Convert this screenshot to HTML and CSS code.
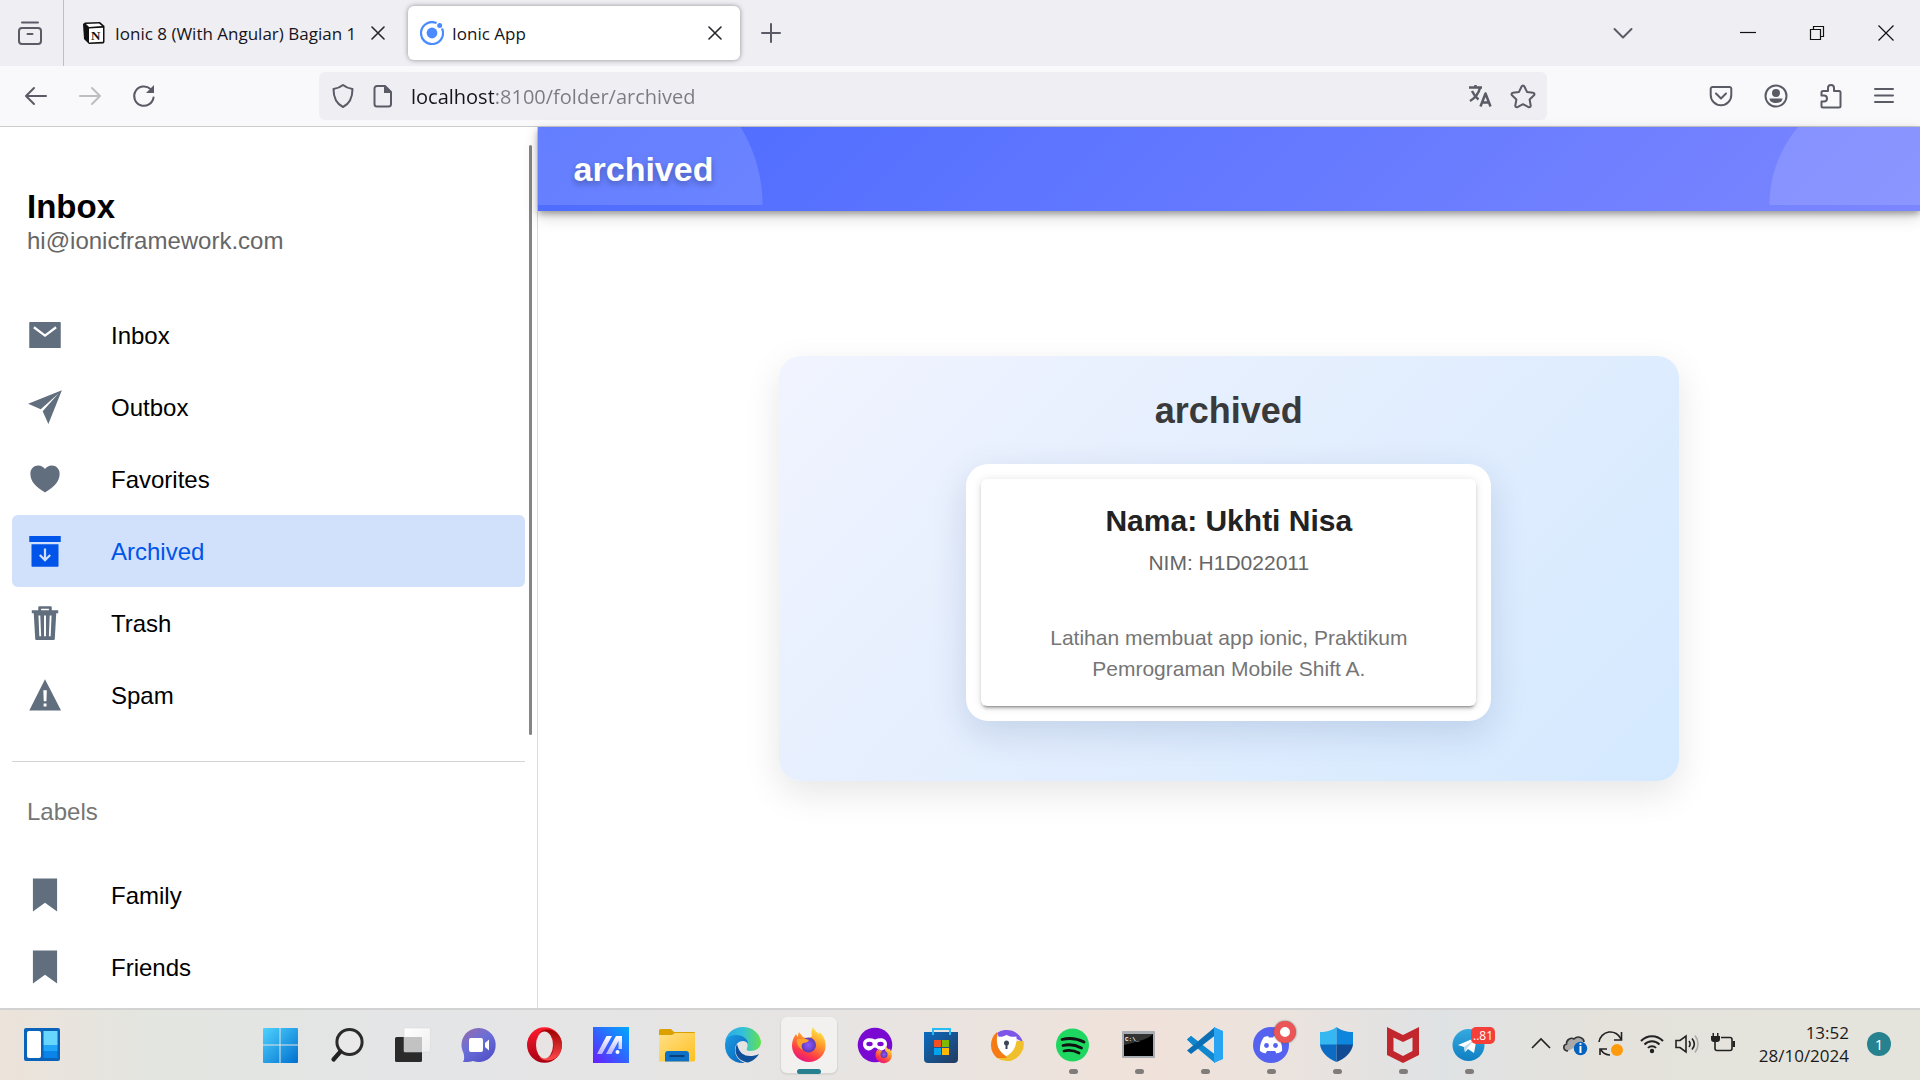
FILE: index.html
```html
<!DOCTYPE html>
<html lang="id">
<head>
<meta charset="utf-8">
<meta name="viewport" content="width=device-width, initial-scale=1">
<title>Ionic App</title>
<link rel="stylesheet" href="styles.css">
</head>
<body>
<div class="desktop">

<header class="browser">
  <div class="tabstrip">
    <button class="recent" aria-label="Recent browsing">
      <svg width="26" height="26" viewBox="0 0 26 26" class="line"><path d="M5 2.500h16" /><rect x="2" y="8" width="22" height="16" rx="3"/><path d="M10.500 14h5"/></svg>
    </button>
    <div class="tab">
      <svg width="22" height="22" viewBox="0 0 22 22"><path d="M0 2 2 0.500 17 0l4.500 4v16l-1 1.500L6 22l-5-5z" fill="#111"/><path d="M6 6.500 20 5.700v14L6 20.500z" fill="#fff"/><path d="M3 2 16 1.500l3 2.500L6 5z" fill="#fff"/><text x="8" y="18" class="notion-n">N</text></svg>
      <span class="tab-title">Ionic 8 (With Angular) Bagian 1</span>
      <button class="tab-close" aria-label="Close tab"><svg width="14" height="14" viewBox="0 0 14 14" class="line dark"><path d="m1 1 12 12M13 1 1 13"/></svg></button>
    </div>
    <div class="tab tab-active">
      <svg width="24" height="24" viewBox="0 0 24 24"><path d="M16.600 2.100A11 11 0 1 0 22 7.500" fill="none" stroke="#4a8cff" stroke-width="2.200"/><circle cx="12" cy="12" r="5.400" fill="#4a8cff"/><circle cx="19.700" cy="4.500" r="2.500" fill="#4a8cff"/></svg>
      <span class="tab-title">Ionic App</span>
      <button class="tab-close" aria-label="Close tab"><svg width="14" height="14" viewBox="0 0 14 14" class="line dark"><path d="m1 1 12 12M13 1 1 13"/></svg></button>
    </div>
    <button class="newtab" aria-label="New tab"><svg width="20" height="20" viewBox="0 0 20 20" class="line"><path d="M10 1v18M1 10h18"/></svg></button>
    <button class="alltabs" aria-label="List all tabs"><svg width="20" height="20" viewBox="0 0 20 20" class="line"><path d="m1.500 6 8.500 8.500L18.500 6"/></svg></button>
    <div class="winbtns">
      <button aria-label="Minimize"><svg width="16" height="16" viewBox="0 0 16 16" class="hair"><path d="M0 7.500h16"/></svg></button>
      <button aria-label="Restore"><svg width="16" height="16" viewBox="0 0 16 16" class="hair"><path d="M1.500 4.500h10v10h-10zM4.500 4.500v-3h10v10h-3"/></svg></button>
      <button aria-label="Close"><svg width="18" height="18" viewBox="0 0 18 18" class="hair"><path d="m1.500 1.500 15 15M16.500 1.500l-15 15"/></svg></button>
    </div>
  </div>
  <div class="toolbar">
    <div class="navbtns">
      <button aria-label="Back"><svg width="24" height="24" viewBox="0 0 24 24" class="line"><path d="M22 12H2M10 4l-8 8 8 8"/></svg></button>
      <button aria-label="Forward" disabled><svg width="24" height="24" viewBox="0 0 24 24" class="line faint"><path d="M2 12h20M14 4l8 8-8 8"/></svg></button>
      <button aria-label="Reload"><svg width="24" height="24" viewBox="0 0 24 24" class="line"><path d="M21.500 13.500A9.700 9.700 0 1 1 18.500 5"/><path d="M22 1v8h-8z" fill="#5b5b66" stroke="none"/></svg></button>
    </div>
    <div class="urlbar">
      <svg width="24" height="26" viewBox="0 0 24 26" class="line"><path d="M12 2c3 2.500 6 3.500 9.500 4 0 8-2.500 14.500-9.500 18C5 20.500 2.500 14 2.500 6 6 5.500 9 4.500 12 2z"/></svg>
      <svg width="20" height="24" viewBox="0 0 20 24" class="line"><path d="M4 2h8l6 6v12a2.500 2.500 0 0 1-2.500 2.500H4A2.500 2.500 0 0 1 1.500 20V4.500A2.500 2.500 0 0 1 4 2z"/><path d="M11 1.500V9h7.500z" fill="#5b5b66" stroke="none"/></svg>
      <input class="url" type="text" aria-label="Address" value="localhost:8100/folder/archived">
      <button aria-label="Translate page"><svg width="24" height="24" viewBox="0 0 24 24" class="line bold"><path d="M1 3.500h13M7.500 1v2M12 4C10.500 10 7 14 2 17M4 7c2 4 4 6.500 6.500 8.500"/><path d="m12.500 22.500 5-13 5 13M14.500 18.500h6.500"/></svg></button>
      <button aria-label="Bookmark page"><svg width="26" height="26" viewBox="0 0 26 26" class="line"><path d="M13 2.500c.7 0 1.100.4 1.400 1l2.600 5.400 6 .8c1.400.2 1.900 1.600 1 2.600l-4.400 4.200 1.100 6c.2 1.400-1.100 2.200-2.200 1.600L13 21.200l-5.500 2.900c-1.100.6-2.400-.2-2.200-1.600l1.100-6L2 12.300c-.9-1-.4-2.400 1-2.600l6-.8 2.600-5.400c.3-.6.700-1 1.400-1z"/></svg></button>
    </div>
    <div class="extbtns">
      <button aria-label="Pocket"><svg width="24" height="24" viewBox="0 0 24 24" class="line"><path d="M3.500 3h17A1.800 1.800 0 0 1 22.300 5v6a10.300 10.300 0 0 1-20.600 0V5A1.800 1.800 0 0 1 3.500 3z"/><path d="m7 9.500 5 5 5-5"/></svg></button>
      <button aria-label="Account"><svg width="24" height="24" viewBox="0 0 24 24" class="line"><circle cx="12" cy="12" r="10.500"/><circle cx="12" cy="9" r="4" fill="#5b5b66" stroke="none"/><path d="M5.500 14.500h13c0 3-3 4.500-6.500 4.500s-6.500-1.500-6.500-4.500z" fill="#5b5b66" stroke="none"/></svg></button>
      <button aria-label="Extensions"><svg width="24" height="26" viewBox="0 0 24 26" class="line"><path d="M4 8h5V5a3 3 0 0 1 6 0v3h5a1.500 1.500 0 0 1 1.500 1.500V23A1.500 1.500 0 0 1 20 24.500H4A1.500 1.500 0 0 1 2.500 23v-4.500H5a3 3 0 0 0 0-6H2.500v-3A1.500 1.500 0 0 1 4 8z"/></svg></button>
      <button aria-label="Menu"><svg width="20" height="20" viewBox="0 0 20 20" class="line"><path d="M1 3h18M1 9.500h18M1 16h18"/></svg></button>
    </div>
  </div>
</header>

<div class="page">
  <aside class="menu">
    <div class="menu-head">
      <h1 class="menu-title">Inbox</h1>
      <p class="menu-note">hi@ionicframework.com</p>
    </div>
    <nav class="menu-list" aria-label="Folders">
      <a class="item" href="#inbox"><svg class="ion" viewBox="0 0 512 512"><path d="M32 80a10 10 0 0 1 10-10h428a10 10 0 0 1 10 10v352a10 10 0 0 1-10 10H42a10 10 0 0 1-10-10z"/><path d="m98 146 158 120 158-120" fill="none" stroke="#fff" stroke-width="32"/></svg><span class="item-label">Inbox</span></a>
      <a class="item" href="#outbox"><svg class="ion" viewBox="0 0 512 512"><path d="M496 16 16 208l179 81L448 64 223 317l81 179z"/></svg><span class="item-label">Outbox</span></a>
      <a class="item" href="#favorites"><svg class="ion" viewBox="0 0 512 512"><path d="m256 448-9-6c-42.780-28.570-96.910-60.860-137-108.320-42.250-50-62.520-101.350-62-157C48.630 114.540 98.460 64 159.080 64c48.110 0 80.100 28 96.920 48.210C272.820 92 304.810 64 352.920 64c60.620 0 110.450 50.540 111.080 112.650.560 55.680-19.710 107-62 157-40.090 47.490-94.220 79.780-137 108.350z"/></svg><span class="item-label">Favorites</span></a>
      <a class="item item-active" href="#archived"><svg class="ion" viewBox="0 0 512 512"><path d="M32 44h448v84H32zM64 160h384v310a10 10 0 0 1-10 10H74a10 10 0 0 1-10-10z"/><path d="M256 220v160M182 314l74 74 74-74" fill="none" stroke="#d1e0fb" stroke-width="32"/></svg><span class="item-label">Archived</span></a>
      <a class="item" href="#trash"><svg class="ion" viewBox="0 0 512 512"><path fill-rule="evenodd" d="M160 76V32a16 16 0 0 1 16-16h160a16 16 0 0 1 16 16v44h92v40h-28l-21 366a15 15 0 0 1-15 14H132a15 15 0 0 1-15-14L96 116H68V76zM200 76h112V54H200zM163 150l12 294h26l-12-294zM242 150v294h28V150zM323 150l-12 294h26l12-294z"/></svg><span class="item-label">Trash</span></a>
      <a class="item" href="#spam"><svg class="ion" viewBox="0 0 512 512"><path fill-rule="evenodd" d="M256 32 484 476H32zM232 190l6 156h38l6-156zM236 376v44h42v-44z"/></svg><span class="item-label">Spam</span></a>
    </nav>
    <nav class="labels-list" aria-labelledby="labels-h">
      <h2 class="labels-title" id="labels-h">Labels</h2>
      <a class="item" href="#family"><svg class="ion" viewBox="0 0 512 512"><path d="M428 490 256 366 84 490V22h344z"/></svg><span class="item-label">Family</span></a>
      <a class="item" href="#friends"><svg class="ion" viewBox="0 0 512 512"><path d="M428 490 256 366 84 490V22h344z"/></svg><span class="item-label">Friends</span></a>
    </nav>
    <div class="scroll-thumb"></div>
  </aside>

  <main class="content">
    <div class="app-header">
      <div class="bubbles"></div>
      <h1 class="app-title">archived</h1>
    </div>
    <div class="stage">
      <section class="panel">
        <h2 class="panel-title">archived</h2>
        <div class="frame">
          <article class="card">
            <h3 class="card-name">Nama: Ukhti Nisa</h3>
            <p class="card-nim">NIM: H1D022011</p>
            <p class="card-text">Latihan membuat app ionic, Praktikum Pemrograman Mobile Shift A.</p>
          </article>
        </div>
      </section>
    </div>
  </main>
</div>

<footer class="taskbar">
  <svg width="0" height="0" class="defs" aria-hidden="true"><defs>
    <linearGradient id="win" x1="0" y1="0" x2="1" y2="1"><stop offset="0" stop-color="#4fd2ff"/><stop offset="1" stop-color="#0070ce"/></linearGradient>
    <linearGradient id="chat" x1="0" y1="0" x2=".7" y2="1"><stop offset="0" stop-color="#9a6aa8"/><stop offset=".5" stop-color="#6a6fd8"/><stop offset="1" stop-color="#5252c8"/></linearGradient>
    <linearGradient id="opera" x1="0" y1="0" x2="0" y2="1"><stop offset="0" stop-color="#ff1b2d"/><stop offset="1" stop-color="#a70014"/></linearGradient>
    <linearGradient id="opera2" x1="0" y1="0" x2="0" y2="1"><stop offset="0" stop-color="#9c0000"/><stop offset="1" stop-color="#ff4b4b"/></linearGradient>
    <linearGradient id="asus" x1="0" y1="1" x2="1" y2="0"><stop offset="0" stop-color="#6a1cff"/><stop offset=".5" stop-color="#2f66ff"/><stop offset="1" stop-color="#00a8ff"/></linearGradient>
    <linearGradient id="asusbar" x1="0" y1="0" x2="0" y2="1"><stop offset="0" stop-color="#fff"/><stop offset="1" stop-color="#b9b2ff"/></linearGradient>
    <linearGradient id="folder" x1="0" y1="0" x2="1" y2="1"><stop offset="0" stop-color="#ffe08a"/><stop offset="1" stop-color="#ffc01e"/></linearGradient>
    <linearGradient id="edge" x1="0" y1="0" x2="1" y2="0"><stop offset="0" stop-color="#2aa7e8"/><stop offset=".5" stop-color="#33c1d8"/><stop offset="1" stop-color="#62e24c"/></linearGradient>
    <linearGradient id="edge2" x1="0" y1="0" x2="1" y2="1"><stop offset="0" stop-color="#1b9de2"/><stop offset="1" stop-color="#0b5fb8"/></linearGradient>
    <linearGradient id="fox" x1=".8" y1="0" x2=".3" y2="1"><stop offset="0" stop-color="#fff44f"/><stop offset=".4" stop-color="#ff9a2a"/><stop offset=".75" stop-color="#ff3b47"/><stop offset="1" stop-color="#e31587"/></linearGradient>
    <radialGradient id="foxcore"><stop offset="0" stop-color="#9059ff"/><stop offset="1" stop-color="#5b3bb5"/></radialGradient>
    <linearGradient id="store" x1="0" y1="0" x2="1" y2="1"><stop offset="0" stop-color="#0a6cc0"/><stop offset="1" stop-color="#243a5e"/></linearGradient>
    <linearGradient id="tg" x1="0" y1="0" x2="0" y2="1"><stop offset="0" stop-color="#35a9e0"/><stop offset="1" stop-color="#0f7fc2"/></linearGradient>
    <linearGradient id="glass" x1="0" y1="0" x2="1" y2="1"><stop offset="0" stop-color="#fff"/><stop offset="1" stop-color="#eee"/></linearGradient>
  </defs></svg>
  <button class="widgets" aria-label="Widgets"><svg width="36" height="36" viewBox="0 0 36 36"><rect y="1" width="36" height="33" rx="2" fill="#0a63b8"/><rect x="3" y="4" width="14" height="27" rx="2" fill="#fff"/><path d="M19.500 4h14v14h-14z" fill="#67d6ff"/><path d="M19.500 18h14v6h-14z" fill="#1fa4f8"/><path d="M19.500 24h14v7h-14z" fill="#0a84e8"/></svg></button>
  <div class="apps">
    <button class="app" aria-label="Start"><svg class="app-ic" viewBox="0 0 36 36"><path fill="url(#win)" d="M0 2a1 1 0 0 1 1-1h15.500v16.500H0zM17.500 1H34a1 1 0 0 1 1 1v15.500H17.500zM0 18.500h16.500V36H1a1 1 0 0 1-1-1zM17.500 18.500H35V35a1 1 0 0 1-1 1H17.500z"/></svg></button>
    <button class="app" aria-label="Search"><svg class="app-ic" viewBox="0 0 36 36"><circle cx="20.500" cy="15" r="12.600" fill="#e9e9e9" stroke="#2b2b2b" stroke-width="3"/><path d="m11.500 24.500-7 8" stroke="#222" stroke-width="4.200" stroke-linecap="round"/></svg></button>
    <button class="app" aria-label="Task view"><svg class="app-ic" viewBox="0 0 36 36"><rect y="10" width="27" height="25" rx="1.500" fill="#2b2b2b"/><rect x="9" y="1" width="26.500" height="24" rx="1" fill="url(#glass)" stroke="#d5d5d5" stroke-width=".5"/><path d="M9 10h18v15H9z" fill="#c2c2c2"/></svg></button>
    <button class="app" aria-label="Chat"><svg class="app-ic" viewBox="0 0 36 36"><path d="M18 1a17 17 0 1 1-6 33c-3 1-6 1.300-10 1 1.500-3 1.500-5 .5-9A17 17 0 0 1 18 1z" fill="url(#chat)"/><rect x="8" y="11" width="14" height="14" rx="2" fill="#fff"/><path d="m24 16 4-3.500v11L24 20z" fill="#fff"/></svg></button>
    <button class="app" aria-label="Opera"><svg class="app-ic" viewBox="0 0 36 36"><ellipse cx="17.500" cy="18" rx="17.500" ry="17.800" fill="url(#opera)"/><path d="M12 6C20-2 35 4 35 18S20 38 12 30c12 3 15-4 15-12S22 3 12 6z" fill="url(#opera2)"/><ellipse cx="17.500" cy="18" rx="8.500" ry="13.500" fill="#e8e4e3"/></svg></button>
    <button class="app" aria-label="MyASUS"><svg class="app-ic" viewBox="0 0 36 36"><path d="M0 0h36v36H0z" fill="url(#asus)"/><path d="M4 27 13.500 9H19L9 27zM13 27l10-18h6v13h-3.500v-8L18.500 27z" fill="url(#asusbar)"/><circle cx="24.500" cy="25" r="2" fill="#fff"/></svg></button>
    <button class="app" aria-label="File Explorer"><svg class="app-ic" viewBox="0 0 36 36"><path d="M0 3.500A1.500 1.500 0 0 1 1.500 2H12l3 3h20a1 1 0 0 1 1 1v6H0z" fill="#dca000"/><path d="M0 8h13l3-2h20v27a1.500 1.500 0 0 1-1.500 1.500h-33A1.500 1.500 0 0 1 0 33z" fill="url(#folder)"/><path d="M6 34.500V27a3 3 0 0 1 3-3h18a3 3 0 0 1 3 3v7.500z" fill="#0d72c7"/><path d="M10.500 29h15" stroke="#0a3f7a" stroke-width="2"/></svg></button>
    <button class="app" aria-label="Edge"><svg class="app-ic" viewBox="0 0 36 36"><path d="M18 0C8 0 2 6.500 0 14c4-5 10-6 15-4 6 2 9 7 7 11-1 2 0 3 3 3 6 0 11-3 11-9C35 6 27 0 18 0z" fill="url(#edge)"/><path d="M0 18C0 10 6 8 11 8c7 0 12 4 12 9-1-2-3-3-5-3-5 0-8 4-8 9 0 6 4 11 10 13C8 37 0 29 0 18z" fill="url(#edge2)"/><path d="M12 17c-4 8 0 16 10 18.500 5-.5 9-4 12-8.500-3 1.500-6 2-9 2-6 0-11-3-13-12z" fill="#10509a"/></svg></button>
    <button class="app app-open" aria-label="Firefox"><svg class="app-ic" viewBox="0 0 36 36"><path id="foxshape" d="M22 0c1 3 4 5 6 7l.5-2C33 9 35 14 34.500 20 34 28 27 35 18 35S1 28 1 19c0-4 1-8 4-12l1.500 3L8 5l4 5 5 2 4-3c-1-3-.5-6 1-9z" fill="url(#fox)"/><circle cx="17.500" cy="18" r="7.500" fill="url(#foxcore)"/><path d="M6 12c4 0 8-1 12 1-1 2-3 3-6 3-2 2-2 5 0 7-4-2-7-6-6-11z" fill="#ffa32c"/></svg></button>
    <button class="app" aria-label="Firefox private browsing"><svg class="app-ic" viewBox="0 0 36 36"><circle cx="18" cy="18" r="17.300" fill="#7a0ad1"/><path d="M6 17c0-6 7-7 12-4.500C23 10 30 11 30 17c0 4-3 6.500-6 6.500s-4-3-6-3-3 3-6 3-6-2.500-6-6.500z" fill="#fff"/><ellipse cx="12.500" cy="17" rx="3.200" ry="2.200" fill="#7a0ad1"/><ellipse cx="23.500" cy="17" rx="3.200" ry="2.200" fill="#7a0ad1"/><use href="#foxshape" transform="translate(18 19) scale(.49)"/><circle cx="27" cy="27.500" r="3.500" fill="url(#foxcore)"/></svg></button>
    <button class="app" aria-label="Microsoft Store"><svg class="app-ic" viewBox="0 0 36 36"><path d="M1 5h34v27a4 4 0 0 1-4 4H5a4 4 0 0 1-4-4z" fill="url(#store)"/><path d="M10 8V2h17v6" fill="none" stroke="#26bdf5" stroke-width="2"/><path d="M11 13h7v7h-7z" fill="#f25022"/><path d="M19 13h7v7h-7z" fill="#7fba00"/><path d="M11 21h7v7h-7z" fill="#00a4ef"/><path d="M19 21h7v7h-7z" fill="#ffb900"/></svg></button>
    <button class="app" aria-label="Secure Browser"><svg class="app-ic" viewBox="0 0 36 36"><path d="M8 6A17 17 0 0 1 34 15L26 11 10 10z" fill="#7d55e8"/><path d="M34.500 14A17 17 0 0 1 8 31l9-3 11-14z" fill="#f0c02c"/><path d="M8 5a17 17 0 0 0 0 26h10L9 20z" fill="#f57c14"/><path d="M17.500 8c4 2 7 2 10 1.500C28 19 24 26 17.500 29 11 26 7 19 8 9.500c3 .5 5.500.5 9.500-1.500z" fill="#fff"/><circle cx="17.500" cy="16" r="2.500" fill="#3c4358"/><path d="M16.500 17h2v5h-2z" fill="#3c4358"/></svg></button>
    <button class="app app-running" aria-label="Spotify"><svg class="app-ic" viewBox="0 0 36 36"><circle cx="17.500" cy="18" r="16.500" fill="#1ed760"/><path d="M7 12.500c8-2 15-1 22 2.500M8 18.500c6-1.500 12-1 18.500 2.500M9 24c5-1.200 10-.6 15 2" fill="none" stroke="#111" stroke-width="2.800" stroke-linecap="round"/></svg></button>
    <button class="app app-running" aria-label="Command Prompt"><svg class="app-ic" viewBox="0 0 36 36"><rect x="1" y="4" width="33" height="27" rx="1" fill="#a9acb0"/><path d="M3 7h29v22H3z" fill="#000"/><path d="M3 7h29c-6 6-14 7-29 11z" fill="#333"/><text x="4" y="14" class="cmd-text">C:\_</text></svg></button>
    <button class="app app-running" aria-label="Visual Studio Code"><svg class="app-ic" viewBox="0 0 36 36"><path d="M0 12.500 4 9l24 18.500V36z" fill="#0f88cf"/><path d="M0 23.500 4 27 28 8.500V0z" fill="#0a6fb4"/><path d="M0 12.500 4 9l7 5.500-5 4z" fill="#0f88cf"/><path d="m27 0 9 4v28l-9 4z" fill="#27a4f2"/></svg></button>
    <button class="app app-running" aria-label="Discord"><svg class="app-ic" viewBox="0 0 36 36"><circle cx="18" cy="18" r="18" fill="#5562f0"/><path d="M11 10l4-1 1 1.500h4L21 9l4 1c3 4 4.500 9 4 14-2 1.500-4 2-5.500 2.500L22 24h-8l-1.500 2.500C11 26 9 25.500 7 24c-.5-5 1-10 4-14z" fill="#fff"/><circle cx="13.500" cy="18.500" r="2.400" fill="#5562f0"/><circle cx="22.500" cy="18.500" r="2.400" fill="#5562f0"/></svg><span class="live"></span></button>
    <button class="app app-running" aria-label="Windows Security"><svg class="app-ic" viewBox="0 0 36 36"><path d="M17.500 0v18H1V5c7 0 12-1.500 16.500-5z" fill="#35b8f2"/><path d="M17.500 0v18H34V5c-7 0-12-1.500-16.500-5z" fill="#0f86dd"/><path d="M1 17.500h16.500V35C8 31 2 25 1 17.500z" fill="#0c6cc4"/><path d="M34 17.500H17.500V35C27 31 33 25 34 17.500z" fill="#114a94"/></svg></button>
    <button class="app app-running" aria-label="McAfee"><svg class="app-ic" viewBox="0 0 36 36"><path d="m2 0 16 8 16-8v28l-16 8L2 28zM8.500 10.500v13.500l9.500 5 9.500-5V10.500L18 15z" fill="#c1272d" fill-rule="evenodd"/></svg></button>
    <button class="app app-running" aria-label="Telegram"><svg class="app-ic" viewBox="0 0 36 36"><circle cx="17.500" cy="18" r="16" fill="url(#tg)"/><path d="m7 18 19-8-3 16-6-4-3 3-1-5z" fill="#fff"/><path d="m13 20 10-7-7 8-2 4z" fill="#b9d9ee"/></svg><span class="count">..81</span></button>
  </div>
  <div class="tray">
    <button aria-label="Hidden icons"><svg width="20" height="24" viewBox="0 0 20 24" class="tray-line"><path d="m1 16 9-9 9 9"/></svg></button>
    <div class="sync">
      <svg width="26" height="24" viewBox="0 0 26 24"><path d="M6 19C1 19 .5 13 4.500 12 4 8 9 5 12 7c4-4 10-1 10 3" fill="#a9a9a9" stroke="#333" stroke-width="1.600"/><circle cx="18.500" cy="16.500" r="6.700" fill="#0563bd"/><text x="16.500" y="21" class="info-i">i</text></svg>
      <svg width="26" height="26" viewBox="0 0 26 26" class="tray-line"><path d="M1 11A11.500 11.500 0 0 1 23 8M23.500 1v8H16M2 24v-6h7M3 19c2 3 5 5 9 5"/><circle cx="19" cy="19" r="6" fill="#ff9a0c" stroke="none"/></svg>
    </div>
    <svg width="24" height="24" viewBox="0 0 24 24" class="tray-line"><path d="M1 9C7 2.500 17 2.500 23 9M4.500 12.500c4-4.500 11-4.500 15 0M8 16c2-2.500 6-2.500 8 0" stroke-width="2"/><circle cx="12" cy="19" r="2.200" fill="#222" stroke="none"/></svg>
    <svg width="24" height="24" viewBox="0 0 24 24" class="tray-line"><path d="M1 8.500h4L11 4v16l-6-4.500H1z"/><path d="M14 9c1.500 2 1.500 4 0 6M17 6.500c3 3.500 3 7.500 0 11"/><path d="M20 3.500c4 5 4 12 0 17" stroke="#aaa"/></svg>
    <svg width="26" height="24" viewBox="0 0 26 24" class="tray-line"><path d="M11 5.500h9a2 2 0 0 1 2 2v9a2 2 0 0 1-2 2H7a2 2 0 0 1-2-2V9"/><path d="M1 4h9v3a3 3 0 0 1-3 3H4a3 3 0 0 1-3-3zM2.500 1H4v4H2.500zM7 1h1.500v4H7zM22.500 9H25v6h-2.500z" fill="#222" stroke="none"/></svg>
    <div class="clock"><time>13:52</time><time>28/10/2024</time></div>
    <span class="notif">1</span>
  </div>
</footer>
</div>
</body>
</html>
```
FILE: styles.css
```css
* { box-sizing: border-box; }
body { margin: 0; font-family: "Liberation Sans", Arial, sans-serif; color: #000; background: #fff; }
h1, h2, h3, p { margin: 0; }
button { padding: 0; border: 0; background: none; display: flex; align-items: center; justify-content: center; font: inherit; }
svg { flex: none; display: block; }
.desktop { display: flex; flex-direction: column; height: 100vh; }

/* browser chrome */
.browser { flex: none; border-bottom: 1px solid #ccc; font-family: "Open Sans", "Noto Sans", sans-serif; }
.line { fill: none; stroke: #5b5b66; stroke-width: 2; stroke-linecap: round; stroke-linejoin: round; }
.dark { stroke: #26262c; stroke-width: 1.600; }
.faint { stroke: #bdbdc3; }
.bold { stroke-width: 2.500; stroke-linecap: butt; }
.hair { fill: none; stroke: #111; stroke-width: 1.200; }
.tabstrip { display: flex; align-items: center; height: 66px; background: #efeef3; }
.recent { width: 64px; height: 66px; padding-right: 4px; border-right: 1px solid #c0bfc6; }
.tab { display: flex; align-items: center; gap: 10px; width: 332px; height: 54px; padding: 0 11px 0 19px; font-size: 17px; color: #15141a; white-space: nowrap; }
.tab-title { flex: 1; overflow: hidden; }
.tab-active { margin-left: 12px; padding: 0 18px 0 12px; gap: 8px; background: #fff; border-radius: 6px; box-shadow: 0 0 5px rgba(0, 0, 0, .4); }
.newtab { width: 62px; height: 54px; }
.alltabs { width: 48px; height: 54px; margin-left: auto; }
.winbtns { display: flex; margin-left: 66px; }
.winbtns button { width: 69px; height: 60px; }
.toolbar { display: flex; align-items: center; height: 60px; background: #f9f9fb; }
.navbtns { display: flex; gap: 30px; padding-left: 24px; flex: none; width: 319px; }
.urlbar { flex: 1; display: flex; align-items: center; gap: 18px; height: 48px; padding: 0 11px 0 12px; background: #efeef3; border-radius: 6px; }
.url { flex: 1; min-width: 0; height: 40px; padding: 0; border: 0; outline: 0; font: 20px "Open Sans", "Noto Sans", sans-serif; color: transparent; background: linear-gradient(90deg, #15141a 83px, #7b7a82 83px); background-clip: text; -webkit-background-clip: text; }
.extbtns { display: flex; align-items: center; gap: 31px; padding: 0 26px 0 162px; }

/* side menu */
.page { flex: 1; min-height: 0; display: flex; }
.menu { position: relative; flex: 0 0 28%; padding: 60px 12px 0; border-right: 1px solid #dcdcdc; overflow: hidden; }
.menu-head { padding: 0 15px; margin-bottom: 44px; }
.menu-title { font-size: 33px; line-height: 40px; }
.menu-note { font-size: 24px; line-height: 28px; color: #666; }
.menu-list { padding-bottom: 30px; border-bottom: 1px solid #d4d4d4; }
.item { display: flex; align-items: center; gap: 48px; height: 72px; padding: 0 15px; border-radius: 6px; font-size: 24px; line-height: 28px; color: #000; text-decoration: none; }
.item-label { padding-top: 2px; }
.ion { width: 36px; height: 36px; fill: #616e7e; }
.item-active { background: #d1e0fb; color: #0054e9; }
.item-active .ion { fill: #0054e9; }
.labels-title { padding: 30px 15px 27px; font-size: 24px; line-height: 40px; font-weight: 400; color: #757575; }
.scroll-thumb { position: absolute; top: 18px; right: 5px; width: 3px; height: 67%; border-radius: 2px; background: #858585; }

/* folder page */
.content { flex: 1; min-width: 0; display: flex; flex-direction: column; }
.app-header { position: relative; display: flex; align-items: center; height: 84px; padding: 0 36px; background: linear-gradient(135deg, #4c6bff, #7b86ff); box-shadow: 0 3px 6px rgba(0, 0, 0, .3), 0 6px 15px rgba(0, 0, 0, .16); }
.bubbles { position: absolute; inset: 0 0 6px; background: radial-gradient(circle at 75px 78px, rgba(255, 255, 255, .13) 149px, transparent 150px), radial-gradient(circle at calc(100% - 30px) 78px, rgba(255, 255, 255, .13) 120px, transparent 121px); }
.app-title { position: relative; font-size: 34px; line-height: 40px; color: #fff; text-shadow: 0 3px 6px rgba(0, 0, 0, .3); }
.stage { flex: 1; display: flex; align-items: center; justify-content: center; padding: 0 24px 83px; }
.panel { width: 900px; max-width: 100%; padding: 30px 30px 60px; border-radius: 22px; background: linear-gradient(135deg, #f1f4ff, #e8f0fe 30%, #d4e9ff); box-shadow: 0 12px 36px rgba(0, 0, 0, .1); }
.panel-title { margin-bottom: 28px; font-size: 36px; line-height: 50px; text-align: center; color: #3a3a3a; }
.frame { width: 525px; max-width: 100%; margin: 0 auto; padding: 15px; border-radius: 22px; background: #fff; box-shadow: 0 12px 36px rgba(0, 40, 100, .14); }
.card { padding: 24px 60px 22px; border-radius: 6px; text-align: center; box-shadow: 0 4px 2px -3px rgba(0, 0, 0, .3), 0 3px 3px rgba(0, 0, 0, .14), 0 1px 8px rgba(0, 0, 0, .12); }
.card-name { font-size: 30px; line-height: 36px; color: #222; }
.card-nim { margin: 11px 0 46px; font-size: 21px; line-height: 26px; color: #666; }
.card-text { font-size: 21px; line-height: 31px; color: #757575; }

/* taskbar */
.taskbar { flex: none; display: flex; align-items: center; height: 72px; padding-left: 24px; border-top: 2px solid #d2d2d2; background: linear-gradient(90deg, #ece3da, #e3e5e0 8%, #e4e5e7 22%, #e7e4e2 45%, #f0e2da 60%, #ece3dd 66%, #dfe2e4 75%, #e5e2dc 83%, #e4e4dc); }
.defs { position: absolute; }
.apps { display: flex; margin-left: 188px; }
.app { position: relative; width: 66px; height: 56px; }
.app-ic { width: 36px; height: 36px; overflow: visible; }
.app-open::before { content: ""; position: absolute; inset: 0 5px; border-radius: 6px; background: #f3f1f0; box-shadow: 0 1px 1px 1px #d9d6d4; }
.app-open .app-ic { position: relative; }
.app-open::after, .app-running::after { content: ""; position: absolute; bottom: -1px; left: 29px; width: 9px; height: 5px; border-radius: 3px; background: #7f7c7a; }
.app-open::after { left: 21px; width: 24px; background: #26808f; }
.live { position: absolute; top: 4px; left: 36px; width: 22px; height: 22px; border: 6px solid #ec5555; border-radius: 50%; background: #fff; box-shadow: 0 0 2px #555; }
.count { position: absolute; top: 10px; left: 35px; width: 24px; height: 17px; border-radius: 5px; background: #f5403a; color: #fff; font: 12px/17px "Open Sans", sans-serif; text-align: center; }
.tray { display: flex; align-items: center; gap: 11px; margin-left: auto; padding: 0 29px 2px 0; font-family: "Open Sans", "Noto Sans", sans-serif; }
.tray-line { fill: none; stroke: #222; stroke-width: 1.600; }
.sync { display: flex; align-items: center; gap: 10px; padding-right: 5px; }
.clock { display: flex; flex-direction: column; width: 102px; text-align: right; font-size: 17px; line-height: 23px; color: #1a1a1a; }
.notif { width: 24px; height: 24px; margin-left: 7px; border-radius: 50%; background: #27828f; color: #fff; font-size: 15px; line-height: 24px; text-align: center; }
.notion-n { font: bold 13px "Liberation Serif", serif; fill: #111; }
.cmd-text { font: bold 6px "Liberation Mono", monospace; fill: #fff; }
.info-i { font: bold 12px "Open Sans", sans-serif; fill: #fff; }
```
